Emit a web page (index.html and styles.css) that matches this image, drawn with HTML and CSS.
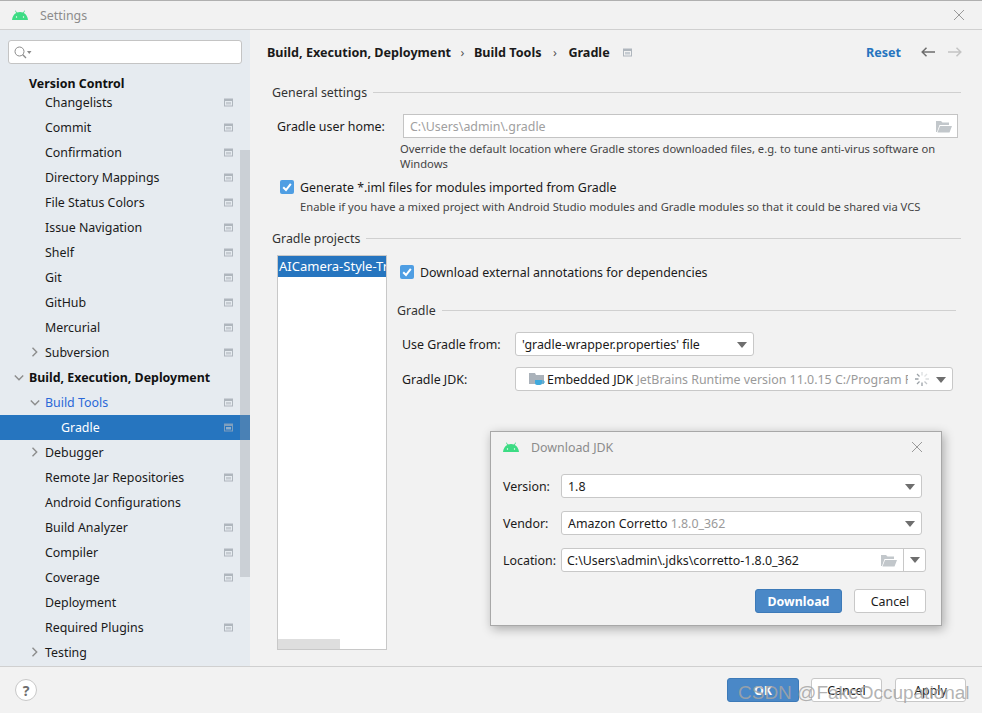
FILE: index.html
```html
<!DOCTYPE html>
<html lang="en">
<head>
<meta charset="utf-8">
<title>Settings</title>
<link rel="stylesheet" href="styles.css">
</head>
<body>
<svg class="defs" width="0" height="0" aria-hidden="true">
  <symbol id="android" viewBox="0 0 16 10">
    <path fill="#3ddc84" d="M0 10C.2 6.6 2 4 4.2 2.9L3 .8 3.6.4 4.9 2.6C6.9 1.8 9.100 1.800 11.100 2.600L12.400.4 13 .8 11.800 2.900C14 4 15.800 6.600 16 10Z"/>
    <circle cx="4.500" cy="7" r=".7" fill="#fff"/><circle cx="11.500" cy="7" r=".7" fill="#fff"/>
  </symbol>
  <symbol id="proj" viewBox="0 0 10 10">
    <path fill="#afb6bd" fill-rule="evenodd" d="M1 1.500h9v8H1ZM2 4v4.500h7V4Z"/>
    <rect x="3" y="5" width="5" height="2.500" fill="#c6ccd2"/>
  </symbol>
  <symbol id="folder" viewBox="0 0 16 13">
    <path fill="#c2c7cb" d="M0 1h5l1.500 1.500H13V5H3.500L1 12H0ZM4 6h12l-2.500 6.500H1.500Z"/>
  </symbol>
  <symbol id="chev-r" viewBox="0 0 8 10"><path fill="none" stroke="#8c8c8c" stroke-width="1.400" d="M1.500.8 5.700 5 1.500 9.200"/></symbol>
  <symbol id="chev-d" viewBox="0 0 10 8"><path fill="none" stroke="#8c8c8c" stroke-width="1.400" d="M.8 1.500 5 5.700 9.200 1.500"/></symbol>
  <symbol id="caret" viewBox="0 0 10 6"><path fill="#6e6e6e" d="M0 0h10L5 6Z"/></symbol>
  <symbol id="close" viewBox="0 0 12 12"><path stroke="#9a9a9a" stroke-width="1" d="M1 1l10 10M11 1 1 11"/></symbol>
  <symbol id="check" viewBox="0 0 14 14">
    <rect width="14" height="14" rx="2" fill="#4f9ee3"/>
    <path fill="none" stroke="#fff" stroke-width="2" d="M3.200 7.200 6 10 10.800 3.800"/>
  </symbol>
</svg>

<div class="window">
  <header class="titlebar">
    <svg class="android"><use href="#android"/></svg>
    <span class="title">Settings</span>
    <svg class="close"><use href="#close"/></svg>
  </header>

  <div class="main">
    <aside class="sidebar">
      <div class="search">
        <svg class="search-icon" viewBox="0 0 18 13"><circle cx="5.500" cy="5.500" r="4.500" fill="none" stroke="#8a8a8a"/><path stroke="#8a8a8a" stroke-width="1.300" d="M8.800 8.800 12 12"/><path fill="#8a8a8a" d="M13 5h4.500l-2.250 3Z"/></svg>
      </div>
      <div class="tree-wrap">
        <ul class="tree">
          <li class="row head first"><span class="txt">Version Control</span></li>
          <li class="row l1"><span class="txt">Changelists</span><svg class="pi"><use href="#proj"/></svg></li>
          <li class="row l1"><span class="txt">Commit</span><svg class="pi"><use href="#proj"/></svg></li>
          <li class="row l1"><span class="txt">Confirmation</span><svg class="pi"><use href="#proj"/></svg></li>
          <li class="row l1"><span class="txt">Directory Mappings</span><svg class="pi"><use href="#proj"/></svg></li>
          <li class="row l1"><span class="txt">File Status Colors</span><svg class="pi"><use href="#proj"/></svg></li>
          <li class="row l1"><span class="txt">Issue Navigation</span><svg class="pi"><use href="#proj"/></svg></li>
          <li class="row l1"><span class="txt">Shelf</span><svg class="pi"><use href="#proj"/></svg></li>
          <li class="row l1"><span class="txt">Git</span><svg class="pi"><use href="#proj"/></svg></li>
          <li class="row l1"><span class="txt">GitHub</span><svg class="pi"><use href="#proj"/></svg></li>
          <li class="row l1"><span class="txt">Mercurial</span><svg class="pi"><use href="#proj"/></svg></li>
          <li class="row l1"><svg class="chev-r"><use href="#chev-r"/></svg><span class="txt">Subversion</span><svg class="pi"><use href="#proj"/></svg></li>
          <li class="row head"><svg class="chev-d"><use href="#chev-d"/></svg><span class="txt">Build, Execution, Deployment</span></li>
          <li class="row l1 link"><svg class="chev-d"><use href="#chev-d"/></svg><span class="txt">Build Tools</span><svg class="pi"><use href="#proj"/></svg></li>
          <li class="row l2 selected"><span class="txt">Gradle</span><svg class="pi"><use href="#proj"/></svg></li>
          <li class="row l1"><svg class="chev-r"><use href="#chev-r"/></svg><span class="txt">Debugger</span></li>
          <li class="row l1"><span class="txt">Remote Jar Repositories</span><svg class="pi"><use href="#proj"/></svg></li>
          <li class="row l1"><span class="txt">Android Configurations</span></li>
          <li class="row l1"><span class="txt">Build Analyzer</span><svg class="pi"><use href="#proj"/></svg></li>
          <li class="row l1"><span class="txt">Compiler</span><svg class="pi"><use href="#proj"/></svg></li>
          <li class="row l1"><span class="txt">Coverage</span><svg class="pi"><use href="#proj"/></svg></li>
          <li class="row l1"><span class="txt">Deployment</span></li>
          <li class="row l1"><span class="txt">Required Plugins</span><svg class="pi"><use href="#proj"/></svg></li>
          <li class="row l1"><svg class="chev-r"><use href="#chev-r"/></svg><span class="txt">Testing</span></li>
        </ul>
        <div class="vscroll"></div>
      </div>
    </aside>

    <section class="content">
      <div class="crumbs">
        <b>Build, Execution, Deployment</b><span class="sep">›</span><b>Build Tools</b><span class="sep sep2">›</span><b>Gradle</b>
        <svg class="pi crumb-pi"><use href="#proj"/></svg>
        <a class="reset">Reset</a>
        <svg class="arrow" viewBox="0 0 14 10"><path fill="none" stroke="#6e6e6e" stroke-width="1.500" d="M14 5H1M5.500.7 1.200 5l4.300 4.300"/></svg>
        <svg class="arrow fwd" viewBox="0 0 14 10"><path fill="none" stroke="#c4c4c4" stroke-width="1.500" d="M0 5h13M8.500.7 12.800 5 8.500 9.300"/></svg>
      </div>

      <div class="sect sect-general"><span>General settings</span><i></i></div>
      <div class="home-row">
        <label>Gradle user home:</label>
        <div class="field home-field"><span>C:\Users\admin\.gradle</span><svg class="folder"><use href="#folder"/></svg></div>
      </div>
      <p class="help home-help">Override the default location where Gradle stores downloaded files, e.g. to tune anti-virus software on Windows</p>
      <div class="check-row gen-check">
        <svg class="check"><use href="#check"/></svg><span>Generate *.iml files for modules imported from Gradle</span>
      </div>
      <p class="help small">Enable if you have a mixed project with Android Studio modules and Gradle modules so that it could be shared via VCS</p>

      <div class="sect sect-projects"><span>Gradle projects</span><i></i></div>
      <div class="projects">
        <div class="plist">
          <div class="pitem">AICamera-Style-Transfer</div>
          <div class="hscroll"></div>
        </div>
        <div class="pright">
          <div class="check-row ext-check">
            <svg class="check"><use href="#check"/></svg><span>Download external annotations for dependencies</span>
          </div>
          <div class="sect sect-sub"><span>Gradle</span><i></i></div>
          <div class="form-row from-row">
            <label>Use Gradle from:</label>
            <div class="combo from-combo"><span>'gradle-wrapper.properties' file</span><svg class="caret"><use href="#caret"/></svg></div>
          </div>
          <div class="form-row jdk-row">
            <label>Gradle JDK:</label>
            <div class="combo jdk-combo">
              <svg class="jdk-folder" viewBox="0 0 16 14"><path fill="#aab2ba" d="M0 1h6l1 2h8v9H0Z"/><path fill="#3fa9dc" d="M6 8h7v3a2 2 0 0 1-2 2H8a2 2 0 0 1-2-2Z"/><path fill="none" stroke="#3fa9dc" d="M13 9h2v2h-2"/></svg>
              <span class="jdk-text">Embedded JDK <em>JetBrains Runtime version 11.0.15 C:/Program Files/Android</em></span>
              <svg class="spinner" viewBox="0 0 14 14"><g stroke="#9aa0a6" stroke-width="1.300"><path d="M7 0v3.500" opacity=".35"/><path d="M7 10.500V14"/><path d="M0 7h3.500"/><path d="M10.500 7H14" opacity=".4"/><path d="M2 2l2.500 2.500"/><path d="M9.500 9.500 12 12" opacity=".6"/><path d="M2 12l2.500-2.500"/><path d="M9.500 4.500 12 2" opacity=".3"/></g></svg>
              <svg class="caret"><use href="#caret"/></svg>
            </div>
          </div>
        </div>
      </div>
    </section>
  </div>

  <footer class="footer">
    <button class="help-btn">?</button>
    <div class="actions">
      <button class="btn primary">OK</button>
      <button class="btn">Cancel</button>
      <button class="btn last">Apply</button>
    </div>
  </footer>

  <div class="dialog">
    <div class="dlg-title">
      <svg class="android"><use href="#android"/></svg>
      <span class="title">Download JDK</span>
      <svg class="close"><use href="#close"/></svg>
    </div>
    <div class="dlg-body">
      <div class="dlg-row"><label>Version:</label><div class="combo dlg-combo"><span>1.8</span><svg class="caret"><use href="#caret"/></svg></div></div>
      <div class="dlg-row"><label>Vendor:</label><div class="combo dlg-combo"><span>Amazon Corretto <em>1.8.0_362</em></span><svg class="caret"><use href="#caret"/></svg></div></div>
      <div class="dlg-row"><label>Location:</label>
        <div class="combo loc-combo"><span>C:\Users\admin\.jdks\corretto-1.8.0_362</span><svg class="folder"><use href="#folder"/></svg><div class="loc-drop"><svg class="caret"><use href="#caret"/></svg></div></div>
      </div>
    </div>
    <div class="dlg-actions">
      <button class="btn primary">Download</button>
      <button class="btn">Cancel</button>
    </div>
  </div>

  <div class="watermark">CSDN @FakeOccupational</div>
</div>
</body>
</html>
```
FILE: styles.css
```css
* { box-sizing: border-box; }
html, body { margin: 0; padding: 0; height: 100%; }
body { font-family: "Noto Sans", "Open Sans", sans-serif; font-size: 12.4px; color: #1a1a1a; background: #f2f2f2; overflow: hidden; }
.defs { position: absolute; }
.window { position: relative; width: 982px; height: 713px; display: flex; flex-direction: column; border-top: 1px solid #b0b0b0; }
em { font-style: normal; color: #9a9a9a; }
p { margin: 0; }
ul { list-style: none; margin: 0; padding: 0; }
label { white-space: nowrap; }

/* title bar */
.titlebar { height: 29px; flex: none; display: flex; align-items: center; padding-left: 12px; padding-right: 17px; border-bottom: 1px solid #d0d0d0; background: #f2f2f2; }
.android { width: 16px; height: 10px; flex: none; }
.title { color: #8c8c8c; margin-left: 12px; }
.close { width: 12px; height: 12px; margin-left: auto; }

/* main */
.main { flex: 1; display: flex; min-height: 0; }
.sidebar { width: 250px; flex: none; background: #e6ebf0; display: flex; flex-direction: column; padding-top: 10px; }
.search { flex: none; height: 24px; margin: 0 8px; background: #fff; border: 1px solid #c4c4c4; border-radius: 3px; display: flex; align-items: center; padding-left: 5px; }
.search-icon { width: 18px; height: 13px; }
.tree-wrap { flex: 1; position: relative; overflow: hidden; min-height: 0; }
.tree { padding-top: 8px; }
.row { height: 25px; display: flex; align-items: center; position: relative; padding-right: 16px; white-space: nowrap; }
.row.first { height: 15px; margin-top: 3px; padding-top: 2px; }
.row.head { font-weight: 700; color: #111; padding-left: 29px; }
.l1 { padding-left: 45px; }
.l2 { padding-left: 61px; }
.link { color: #2a68d8; }
.selected { background: #2675bf; color: #fff; }
.selected .pi { opacity: .65; }
.pi { width: 10px; height: 10px; margin-left: auto; flex: none; }
.row .pi { position: absolute; right: 17px; top: 7px; }
.chev-r { width: 8px; height: 10px; position: absolute; left: 31px; top: 7px; }
.chev-d { width: 10px; height: 8px; position: absolute; left: 30px; top: 9px; }
.head .chev-d { left: 14px; }
.vscroll { position: absolute; right: 0; top: 86px; width: 10px; height: 427px; background: rgba(150,155,160,.33); }

/* content */
.content { flex: 1; padding-left: 17px; min-width: 0; position: relative; }
.crumbs { display: flex; align-items: center; height: 20px; margin-top: 12px; font-size: 12.600px; font-weight: 700; padding-right: 20px; color: #1a1a1a; }
.crumbs b { font-weight: 700; }
.sep { font-weight: 400; color: #555; margin: 0 9.500px; }
.sep2 { margin: 0 11.500px; }
.crumb-pi { margin-left: 12px; }
.reset { color: #2675bf; margin-left: auto; }
.arrow { width: 14px; height: 10px; margin-left: 20px; }
.arrow.fwd { margin-left: 13px; }
.sect { display: flex; align-items: center; height: 18px; padding-left: 5px; color: #333; }
.sect i { flex: 1; height: 1px; background: #d0d0d0; margin-left: 6px; }
.sect-general { margin-top: 21px; margin-right: 21px; }
.home-row { display: flex; align-items: center; margin-top: 13px; padding-left: 10px; height: 24px; }
.home-row label { width: 126px; }
.field { background: #fff; border: 1px solid #c4c4c4; height: 24px; width: 555px; display: flex; align-items: center; padding-left: 6px; color: #a0a0a0; justify-content: space-between; padding-right: 5px; }
.folder { width: 16px; height: 13px; flex: none; }
.help { color: #444; padding-left: 133px; width: 690px; font-size: 11.200px; line-height: 15px; }
.home-help { margin-top: 3px; }
.check-row { display: flex; align-items: center; gap: 6px; height: 18px; white-space: nowrap; }
.check { width: 14px; height: 14px; flex: none; }
.gen-check { margin-top: 7px; padding-left: 13px; }
.help.small { padding-left: 33px; width: auto; margin-top: 3px; }
.sect-projects { margin-top: 15px; margin-right: 21px; }
.projects { display: flex; margin-top: 8px; padding-left: 10px; height: 395px; }
.plist { width: 110px; height: 395px; flex: none; background: #fff; border: 1px solid #c8c8c8; position: relative; overflow: hidden; }
.pitem { height: 21px; background: #2675bf; color: #fff; white-space: nowrap; padding-left: 1px; line-height: 21px; font-size: 13px; }
.hscroll { position: absolute; left: 0; bottom: 0; width: 62px; height: 10px; background: #dedede; }
.pright { flex: 1; min-width: 0; padding-left: 10px; }
.ext-check { margin-top: 8px; padding-left: 3px; }
.sect-sub { margin-top: 20px; padding-left: 0; margin-right: 26px; }
.form-row { display: flex; align-items: center; padding-left: 5px; }
.form-row label { width: 113px; flex: none; }
.from-row { margin-top: 13px; }
.jdk-row { margin-top: 11px; }
.combo { height: 24px; background: #fff; border: 1px solid #c8c8c8; border-radius: 3px; display: flex; align-items: center; padding-left: 6px; white-space: nowrap; position: relative; overflow: hidden; }
.caret { width: 10px; height: 6px; flex: none; }
.combo > .caret { position: absolute; right: 6px; top: 9px; }
.from-combo { width: 239px; }
.jdk-combo { width: 438px; padding-left: 13px; }
.jdk-folder { width: 16px; height: 14px; flex: none; margin-right: 2px; }
.jdk-text { width: 361px; overflow: hidden; flex: none; }
.spinner { width: 14px; height: 14px; position: absolute; right: 23px; top: 4px; background: #fff; }

/* footer */
.footer { flex: none; height: 47px; border-top: 1px solid #d0d0d0; background: #f2f2f2; display: flex; align-items: center; padding: 0 16px 0 15px; justify-content: space-between; }
.help-btn { width: 22px; height: 22px; border-radius: 50%; border: 1px solid #c8c8c8; background: #fff; padding: 0; font: 700 14px "Noto Sans", sans-serif; color: #6e6e6e; }
.actions { display: flex; gap: 12px; }
.btn { height: 24px; width: 71px; background: #fff; border: 1px solid #c8c8c8; border-radius: 3px; font: 12.4px "Noto Sans", sans-serif; color: #1a1a1a; padding: 0; }
.btn.primary { width: 72px; background: #4a88c7; border-color: #3d7ab8; color: #fff; font-weight: 700; }
.btn.last { margin-left: 1px; }

/* dialog */
.dialog { position: absolute; left: 490px; top: 430px; width: 452px; height: 195px; background: #f2f2f2; border: 1px solid #a8a8a8; box-shadow: 2px 3px 10px rgba(0,0,0,.3); }
.dlg-title { display: flex; align-items: center; height: 30px; padding: 0 18px 0 12px; }
.dlg-body { padding: 12px 0 0 12px; }
.dlg-row { display: flex; align-items: center; margin-bottom: 13px; }
.dlg-row label { width: 58px; flex: none; }
.dlg-combo { width: 361px; }
.loc-combo { width: 365px; padding-left: 5px; }
.loc-combo .folder { position: absolute; right: 28px; top: 5px; }
.loc-drop { position: absolute; right: 0; top: 0; width: 22px; height: 22px; border-left: 1px solid #c8c8c8; display: flex; align-items: center; justify-content: center; }
.dlg-actions { display: flex; justify-content: flex-end; gap: 12px; padding: 4px 15px 0 0; }
.dlg-actions .btn { width: 72px; }
.dlg-actions .btn.primary { width: 87px; }

.watermark { position: absolute; left: 738px; top: 681px; font: 19px "Liberation Sans", sans-serif; color: rgba(165,165,165,.85); white-space: nowrap; pointer-events: none; }
```
